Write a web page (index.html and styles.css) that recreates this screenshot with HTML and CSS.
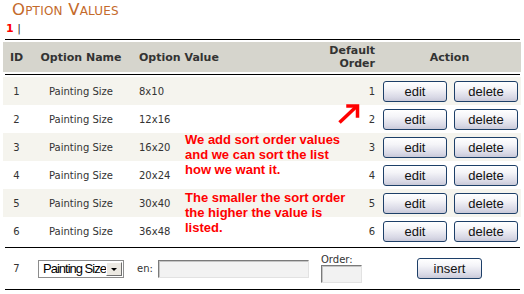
FILE: index.html
```html
<!DOCTYPE html>
<html lang="en">
<head>
    <meta charset="UTF-8">
    <title>Option Values</title>
    <link rel="stylesheet" href="styles.css">
</head>
<body>
    <h1 class="page-title">Option Values</h1>
    <div class="pager"><span class="current">1</span> |</div>

    <table class="values">
        <colgroup>
            <col class="c-id">
            <col class="c-name">
            <col class="c-value">
            <col class="c-order">
            <col class="c-action">
        </colgroup>
        <thead>
            <tr class="rule"><td colspan="5"><div></div></td></tr>
            <tr class="head">
                <th class="id">ID</th>
                <th class="name">Option Name</th>
                <th class="value">Option Value</th>
                <th class="order">Default<br>Order</th>
                <th class="action">Action</th>
            </tr>
            <tr class="rule"><td colspan="5"><div></div></td></tr>
        </thead>
        <tbody>
            <tr>
                <td class="id">1</td><td class="name">Painting Size</td><td class="value">8x10</td><td class="order">1</td>
                <td><div class="actions"><button class="btn">edit</button><button class="btn">delete</button></div></td>
            </tr>
            <tr>
                <td class="id">2</td><td class="name">Painting Size</td><td class="value">12x16</td><td class="order">2</td>
                <td><div class="actions"><button class="btn">edit</button><button class="btn">delete</button></div></td>
            </tr>
            <tr>
                <td class="id">3</td><td class="name">Painting Size</td><td class="value">16x20</td><td class="order">3</td>
                <td><div class="actions"><button class="btn">edit</button><button class="btn">delete</button></div></td>
            </tr>
            <tr>
                <td class="id">4</td><td class="name">Painting Size</td><td class="value">20x24</td><td class="order">4</td>
                <td><div class="actions"><button class="btn">edit</button><button class="btn">delete</button></div></td>
            </tr>
            <tr>
                <td class="id">5</td><td class="name">Painting Size</td><td class="value">30x40</td><td class="order">5</td>
                <td><div class="actions"><button class="btn">edit</button><button class="btn">delete</button></div></td>
            </tr>
            <tr>
                <td class="id">6</td><td class="name">Painting Size</td><td class="value">36x48</td><td class="order">6</td>
                <td><div class="actions"><button class="btn">edit</button><button class="btn">delete</button></div></td>
            </tr>
        </tbody>
        <tfoot>
            <tr class="rule"><td colspan="5"><div></div></td></tr>
            <tr class="add">
                <td class="id">7</td>
                <td class="name-pick">
                    <span class="select">
                        <select><option>Painting Size</option></select>
                        <span class="select-arrow"></span>
                    </span>
                </td>
                <td class="value-new"><label>en: <input type="text" class="field field-value"></label></td>
                <td class="order-new">
                    <label class="small-label">Order:</label>
                    <input type="text" class="field field-order">
                </td>
                <td class="action"><button class="btn btn-insert">insert</button></td>
            </tr>
            <tr class="rule"><td colspan="5"><div></div></td></tr>
        </tfoot>
    </table>

    <!-- annotations drawn over the screenshot -->
    <div class="note note-sort">We add sort order values<br>and we can sort the list<br>how we want it.</div>
    <div class="note note-smaller">The smaller the sort order<br>the higher the value is<br>listed.</div>
    <svg class="note-arrow" width="26" height="24" viewBox="0 0 26 24">
        <path d="M3.5 20.5 L21 4" stroke="#ff0000" stroke-width="3.5" fill="none"/>
        <path d="M12 4 L21.5 4 L21.5 14" stroke="#ff0000" stroke-width="3.5" stroke-linecap="square" fill="none"/>
    </svg>
</body>
</html>
```

FILE: styles.css
```css
:root {
    --title: #c46a2b;
    --text: #333333;
    --head-bg: #d6d5cd;
    --row-alt: #f5f4ee;
    --note: #ff0000;
    --btn-border: #1d3f68;
}

* {
    box-sizing: border-box;
}

body {
    margin: 0;
    position: relative;
    font-family: "DejaVu Sans", Verdana, sans-serif;
    color: var(--text);
    background: #fff;
}

.page-title {
    margin: 0;
    padding-left: 12px;
    font-size: 16.5px;
    line-height: 20px;
    font-weight: normal;
    font-variant: small-caps;
    letter-spacing: 0.2px;
    color: var(--title);
}

.pager {
    height: 18px;
    line-height: 18px;
    padding-left: 6px;
    font-size: 11px;
    margin-bottom: 1px;
}

.pager .current {
    color: #ff0000;
    font-weight: bold;
}

.values {
    margin-left: 3px;
    width: 518px;
    table-layout: fixed;
    border-collapse: separate;
    border-spacing: 0;
}

.c-id { width: 27px; }
.c-name { width: 102px; }
.c-value { width: 184px; }
.c-order { width: 62px; }
.c-action { width: 143px; }

.rule td {
    height: 1px;
    padding: 0;
}

.rule td div {
    height: 1px;
    margin: 0 1px 0 2px;
    background: #000;
}

.head th {
    height: 34px;
    padding: 0;
    font-size: 11px;
    line-height: 13px;
    font-weight: bold;
    background: var(--head-bg);
    border-top: 2px solid #fff;
    border-bottom: 2px solid #fff;
}

.head .value {
    text-align: left;
    padding-left: 7px;
}

.head .order {
    text-align: right;
    padding-right: 3px;
}

tbody td {
    height: 28px;
    padding: 0;
    font-size: 10px;
    vertical-align: middle;
}

tbody tr:nth-child(odd) td {
    background: var(--row-alt);
}

tbody tr:first-child td {
    height: 30px;
    border-top: 2px solid #fff;
}

tbody tr:last-child td {
    height: 30px;
    border-bottom: 2px solid #fff;
}

td.id, td.name {
    text-align: center;
}

td.value {
    padding-left: 7px;
}

td.order {
    text-align: right;
    padding-right: 3px;
}

.actions {
    display: flex;
    gap: 7px;
    padding-left: 5px;
}

.btn {
    width: 64px;
    height: 21px;
    padding: 0;
    font-family: "Liberation Sans", Arial, sans-serif;
    font-size: 13px;
    color: #111;
    border: 1px solid var(--btn-border);
    border-radius: 3px;
    background: linear-gradient(#ffffff 0%, #f4f4f8 35%, #d9d9e6 80%, #c9c9d8 100%);
}

.btn-insert {
    width: 65px;
}

.add td {
    height: 41px;
    padding: 0;
    font-size: 10px;
    vertical-align: middle;
}

.add .id, .add .action {
    text-align: center;
}

.add .name-pick {
    padding-left: 8px;
}

.select {
    position: relative;
    display: inline-block;
    width: 86px;
    height: 18px;
    vertical-align: middle;
}

.select select {
    appearance: none;
    width: 86px;
    height: 18px;
    margin: 0;
    padding: 0 0 0 4px;
    font-family: "Liberation Sans", Arial, sans-serif;
    font-size: 13px;
    letter-spacing: -1px;
    color: #000;
    background: #fff;
    border: 1px solid #8c8c8c;
    border-radius: 0;
}

.select-arrow {
    position: absolute;
    right: 2px;
    top: 2px;
    width: 16px;
    height: 14px;
    background: #ece9e2;
    border: 1px solid;
    border-color: #fff #6f6f6f #6f6f6f #fff;
}

.select-arrow::after {
    content: "";
    position: absolute;
    left: 4px;
    top: 5px;
    border-left: 3px solid transparent;
    border-right: 3px solid transparent;
    border-top: 3px solid #000;
}

.value-new {
    padding-left: 5px !important;
}

.value-new label {
    display: flex;
    align-items: center;
    gap: 5px;
}

.field {
    height: 18px;
    margin: 0;
    background: #f2f2f2;
    border: 1px solid;
    border-color: #7a7a7a #e2e2e2 #e2e2e2 #7a7a7a;
    box-shadow: inset 1px 1px 0 #c4c4c4;
}

.field-value {
    width: 151px;
}

.order-new {
    padding-left: 5px !important;
}

.small-label {
    display: block;
    line-height: 11px;
    font-size: 10px;
}

.field-order {
    display: block;
    width: 41px;
}

.note {
    position: absolute;
    left: 185px;
    font-family: "Liberation Sans", Arial, sans-serif;
    font-size: 13px;
    line-height: 15px;
    font-weight: bold;
    color: var(--note);
}

.note-sort {
    top: 132px;
}

.note-smaller {
    top: 190px;
}

.note-arrow {
    position: absolute;
    left: 336px;
    top: 102px;
}
```
